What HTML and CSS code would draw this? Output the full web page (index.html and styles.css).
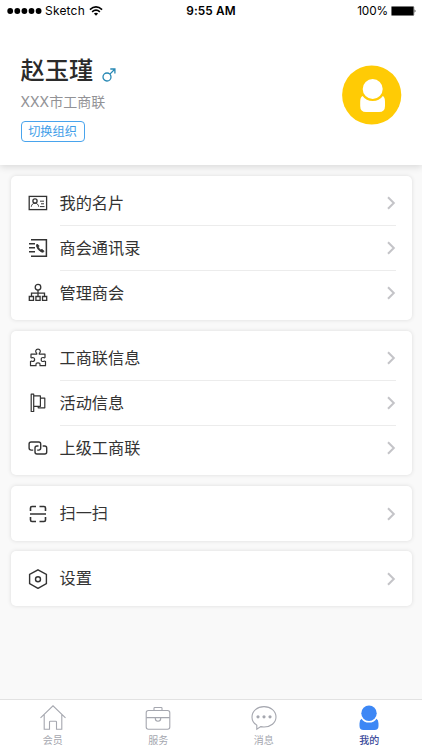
FILE: index.html
```html
<!DOCTYPE html>
<html lang="zh-CN">
<head>
<meta charset="utf-8">
<title>我的</title>
<link rel="stylesheet" href="styles.css">
</head>
<body>
<svg class="defs" width="0" height="0">
  <symbol id="chevron" viewBox="0 0 10 14"><path d="M2 1.200 7.800 7 2 12.800" fill="none" stroke="#c4c4c8" stroke-width="2"/></symbol>
</svg>
<div class="screen">
  <div class="status">
    <div class="carrier">
      <svg width="36" height="8" viewBox="0 0 36 8"><circle cx="3.200" cy="4" r="2.900"/><circle cx="10.300" cy="4" r="2.900"/><circle cx="17.400" cy="4" r="2.900"/><circle cx="24.500" cy="4" r="2.900"/><circle cx="31.600" cy="4" r="2.900"/></svg>
      <span class="name">Sketch</span>
      <svg class="wifi" width="14" height="10" viewBox="0 0 14 10"><path d="M.9 3.600Q7-1.800 13.100 3.600M3.100 5.900Q7 2.500 10.900 5.900" fill="none" stroke="#000" stroke-width="1.600"/><path d="M4.900 7.600Q7 6 9.100 7.600L7 9.700Z"/></svg>
    </div>
    <div class="time">9:55 AM</div>
    <div class="power"><span>100%</span>
      <svg width="26" height="10" viewBox="0 0 26 10"><rect x=".4" y=".4" width="22.400" height="9.200" rx="1" fill="#000" stroke="#777" stroke-width=".8"/><path d="M23.700 3.200q1.600 1.800 0 3.600z"/></svg>
    </div>
  </div>
  <header class="profile">
    <div class="who">
      <div class="title"><h1>赵玉瑾</h1>
        <svg width="14" height="14" viewBox="0 0 14 14" fill="none" stroke="#2788b4" stroke-width="1.300"><circle cx="5" cy="9" r="4"/><path d="M7.900 6.100 12.700 1.200M8.300 1H12.900V5.600"/></svg>
      </div>
      <div class="org">XXX市工商联</div>
      <div class="switch">切换组织</div>
    </div>
    <svg class="avatar" width="60" height="60" viewBox="0 0 60 60"><circle cx="29.700" cy="30" r="29.600" fill="#ffcb05"/><circle cx="30.700" cy="24" r="10" fill="#fff"/><path d="M20.600 31Q24 36 30.700 36T40.800 31Q43 32 43 37V41Q43 47 37 47H24Q18.200 47 18.200 41V37Q18.200 32 20.600 31Z" fill="#fff"/></svg>
  </header>
  <main>
    <section class="card">
      <div class="row"><svg class="icon" viewBox="0 0 20 20"><rect x="1.200" y="3.400" width="17.400" height="13.200"/><circle cx="7" cy="8" r="2.100"/><path d="M3.300 13.700C3.500 11.600 5 10.200 7 10.200S10.500 11.600 10.700 13.700M12 8.200H16M13 10.800H16M12 13.600H16.500" stroke-width="1"/></svg><div class="label">我的名片</div><svg class="chev"><use href="#chevron"/></svg></div>
      <div class="row"><svg class="icon" viewBox="0 0 20 20"><path d="M3 1.700H18.400V18.300H3" stroke-width="1.500"/><path d="M1 5.700H7M1 9.700H7M1 13.700H7" stroke-width="1.500"/><path d="M9.200 6Q8.200 6.800 8.500 8.200 9.600 12.400 14 14.200 15.300 14.400 16.100 13.300L14.100 11.300 12.800 12Q11 10.900 10.300 9L11.200 8Z" fill="#333" stroke-width=".8"/></svg><div class="label">商会通讯录</div><svg class="chev"><use href="#chevron"/></svg></div>
      <div class="row"><svg class="icon" viewBox="0 0 20 20"><circle cx="10" cy="4.200" r="2.800"/><path d="M10 7V13M3.500 13.500V10.200H16.500V13.500M1.300 13.500H5.500V17.300H1.300ZM7.900 13.500H12.100V17.300H7.900ZM14.500 13.500H18.700V17.300H14.500Z"/></svg><div class="label">管理商会</div><svg class="chev"><use href="#chevron"/></svg></div>
    </section>
    <section class="card">
      <div class="row"><svg class="icon" viewBox="0 0 20 20"><path d="M3 6.200H8.700V5.200Q7.400 4.300 7.700 2.900 8.200 1.100 10 1.100T12.300 2.900Q12.600 4.300 11.300 5.200V6.200H17V9.500Q16.500 10.200 15.300 9.500 13.200 9.300 13.200 11.500T15.300 13.500Q16.500 12.800 17.500 13.500V17.700H12V16.800Q12.300 14.800 10 14.800T8 16.800V17.700H2.500V13.500Q3.300 12.900 4.500 13.500 6.600 13.500 6.600 11.500T4.500 9.500Q3.600 10.100 3 9.500Z" stroke-width="1.200" stroke-linejoin="round"/></svg><div class="label">工商联信息</div><svg class="chev"><use href="#chevron"/></svg></div>
      <div class="row"><svg class="icon" viewBox="0 0 20 20"><path d="M3.200 1.200H5.700V18.500H3.200ZM5.700 2.900H12.400V13.300H5.700M12.400 5.200H16.800V14.800H10.200V13.300" stroke-width="1.200" stroke-linejoin="round"/></svg><div class="label">活动信息</div><svg class="chev"><use href="#chevron"/></svg></div>
      <div class="row"><svg class="icon" viewBox="0 0 20 20"><path d="M5.200 12.100H3.200Q1.100 12.100 1.100 10V6Q1.100 4 3.200 4H10.700Q12.700 4 12.700 6V10Q12.700 12.100 10.700 12.100H9.200M14.700 8H16.700Q18.700 8 18.700 10V14Q18.700 16 16.700 16H9Q7 16 7 14V10Q7 8 9 8H10.500" stroke-width="1.400"/></svg><div class="label">上级工商联</div><svg class="chev"><use href="#chevron"/></svg></div>
    </section>
    <section class="card single">
      <div class="row"><svg class="icon" viewBox="0 0 20 20"><path d="M2.500 7V4Q2.500 2.500 4 2.500H8M11.500 2.500H16Q17.500 2.500 17.500 4V7M2.500 13V16Q2.500 17.500 4 17.500H8M11.500 17.500H16Q17.500 17.500 17.500 16V13M2 10H18" stroke-width="1.600"/></svg><div class="label">扫一扫</div><svg class="chev"><use href="#chevron"/></svg></div>
    </section>
    <section class="card single">
      <div class="row"><svg class="icon" viewBox="0 0 20 20"><path d="M10 .8 18.400 5.500V14.700L10 19.400 1.600 14.700V5.500Z" stroke-width="1.400"/><circle cx="10" cy="10.200" r="2.500" stroke-width="1.400"/></svg><div class="label">设置</div><svg class="chev"><use href="#chevron"/></svg></div>
    </section>
  </main>
  <nav class="tabs">
    <div class="tab"><svg viewBox="0 0 28 28"><path d="M1.500 13.800 14 1.800 26.500 13.800M5.200 10.500V25.200H10.500V18Q10.500 17.200 11.300 17.200H16.700Q17.500 17.200 17.500 18V25.200H22.800V10.500"/></svg><span>会员</span></div>
    <div class="tab"><svg viewBox="0 0 28 28"><rect x="2.200" y="6.500" width="23.600" height="18.800" rx="2.200"/><path d="M10 6.500V4.200Q10 3.500 10.700 3.500H17.300Q18 3.500 18 4.200V6.500M2.200 13.600H25.800M11.300 13.600V14.500Q11.300 17.200 14 17.200T16.700 14.500V13.600"/></svg><span>服务</span></div>
    <div class="tab"><svg viewBox="0 0 28 28"><path d="M6.800 25.200V21.300C3.900 19.300 2 16.500 2 13.200 2 7.100 7.200 2.600 14 2.600S26 7.100 26 13 20.500 23 14 23Q12.200 23 10.700 22.600Z"/><g class="dots"><circle cx="8" cy="12.800" r="1.600"/><circle cx="14" cy="12.800" r="1.600"/><circle cx="20" cy="12.800" r="1.600"/></g></svg><span>消息</span></div>
    <div class="tab active"><svg viewBox="0 0 28 28"><circle cx="14" cy="9.300" r="7.700"/><path d="M6.500 14.700Q9 18.600 14 18.600T21.500 14.700Q23.500 16 23.500 19.500V22Q23.500 25.900 19.500 25.900H8.500Q4.500 25.900 4.500 22V19.500Q4.500 16 6.500 14.700Z"/></svg><span>我的</span></div>
  </nav>
</div>
</body>
</html>
```
FILE: styles.css
```css
* { box-sizing: border-box; }
body { margin: 0; background: #f9f9f9; font-family: Inter, "Noto Sans CJK SC", sans-serif; }
svg { display: block; flex: none; }
.defs { position: absolute; }
.screen { width: 422px; height: 750px; display: flex; flex-direction: column; overflow: hidden; }
.status { position: relative; z-index: 1; height: 22px; flex: none; background: #fff; display: grid; grid-template-columns: 1fr auto 1fr; align-items: center; padding: 0 6px 0 7px; font-size: 12px; line-height: 22px; color: #000; }
.carrier, .power { display: flex; align-items: center; }
.name { margin-left: 2px; letter-spacing: .2px; }
.wifi { margin-left: 4px; }
.time { font-weight: 600; font-size: 11.800px; letter-spacing: .1px; margin-left: -1px; }
.power { justify-content: flex-end; gap: 3px; font-size: 11.800px; letter-spacing: -.1px; }
.power svg { margin-right: -1px; }
.profile { height: 143px; background: #fff; box-shadow: 0 2px 7px rgba(0, 0, 0, .13); display: flex; justify-content: space-between; padding: 0 20px 0 20.500px; flex: none; }
.title { display: flex; align-items: center; gap: 9px; height: 36px; margin-top: 30px; }
.title svg { margin-top: 10px; }
h1 { margin: 0; font-size: 24.300px; font-weight: 500; line-height: 36px; color: #2b2b2b; }
.org { font-size: 14px; line-height: 20px; margin-top: 4px; color: #929296; }
.switch { width: 64px; height: 21px; margin-top: 9px; border: 1px solid #49a4ed; border-radius: 4px; color: #3e9ee9; font-size: 12.200px; line-height: 19px; text-align: center; }
.avatar { margin-top: 43px; }
main { flex: 1; padding: 11px 10.500px 0; }
.card { height: 144px; padding: 4.500px 16px 4.500px 17px; margin-bottom: 11px; background: #fff; border-radius: 5px; box-shadow: 0 0 4px rgba(0, 0, 0, .12); }
.card.single { height: 55px; padding-top: 5px; margin-bottom: 10px; }
.row { height: 45px; display: flex; align-items: center; }
.icon { width: 20px; height: 20px; fill: none; stroke: #333; stroke-width: 1.300; }
.label { flex: 1; height: 45px; margin-left: 12px; line-height: 45px; font-size: 16.200px; color: #333; }
.row:not(:last-child) { background: linear-gradient(#ececec, #ececec) 32px 100% / 336px 1px no-repeat; }
.chev { width: 10px; height: 14px; }
.tabs { height: 51px; flex: none; display: grid; grid-template-columns: repeat(4, 1fr); background: #fff; border-top: 1px solid #e2e2e2; }
.tab { display: flex; flex-direction: column; align-items: center; padding-top: 4px; color: #a5a7af; font-size: 10px; line-height: 17px; }
.tab svg { width: 28px; height: 28px; fill: none; stroke: #a5a7af; stroke-width: 1.100; }
.tab .dots { fill: #a5a7af; stroke: none; }
.tab.active { color: #3b4a9b; font-weight: 500; }
.tab.active svg { fill: #3d87f5; stroke: none; }
```
